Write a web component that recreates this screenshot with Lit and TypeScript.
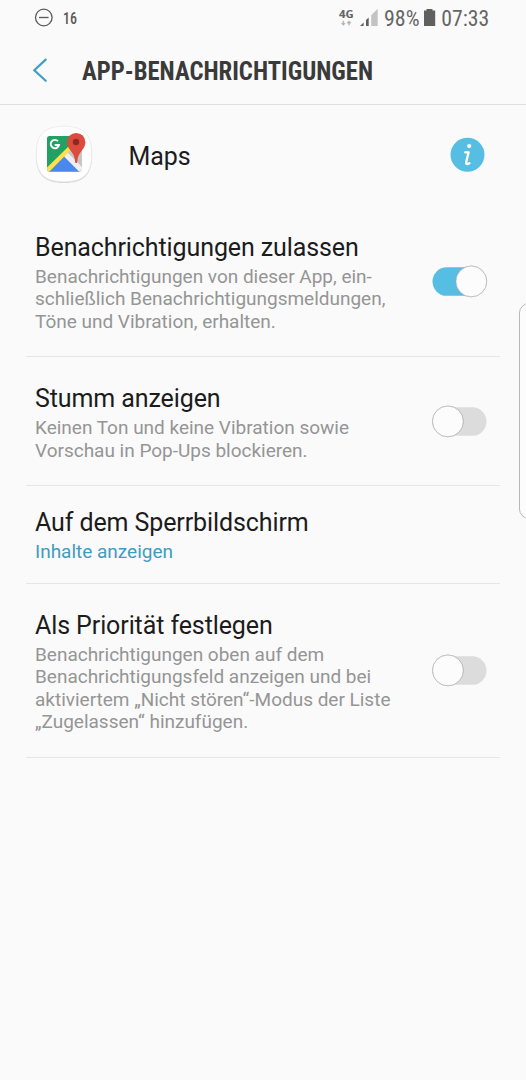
import { LitElement, html, css, nothing } from "lit";
import { customElement, property } from "lit/decorators.js";

@customElement("toggle-switch")
class ToggleSwitch extends LitElement {
  @property({ type: Boolean, reflect: true }) on = false;

  static styles = css`
    :host { display: block; flex: none; width: 55px; height: 34px; }
    svg { display: block; overflow: visible; }
    .thumb { filter: drop-shadow(0 0.8px 0.4px rgba(0, 0, 0, 0.25)); }
  `;

  render() {
    return html`<svg width="55" height="34" viewBox="0 0 55 34">
      <rect x="0.5" y="2.3" width="54" height="28.5" rx="14.25" fill=${this.on ? "#56bee3" : "#dcdcdc"} />
      <circle class="thumb" cx=${this.on ? 39.3 : 15.9} cy="16.4" r="15.4" fill="#fcfcfc" stroke="#b8b8b8" stroke-width="0.8" />
    </svg>`;
  }
}

@customElement("setting-row")
class SettingRow extends LitElement {
  @property() heading = "";
  @property({ attribute: false }) lines: string[] = [];
  @property() value = "";
  @property() toggle = "";

  static styles = css`
    :host { display: flex; align-items: center; justify-content: space-between; box-sizing: border-box; margin: 0 26px; padding: 0 13px 0 9px; border-bottom: 1px solid #e6e6e6; }
    .copy { padding-top: 3px; }
    .heading { margin-bottom: 3px; font-size: 25px; line-height: 30px; color: #1c1c1c; white-space: nowrap; letter-spacing: -0.1px; }
    .line { font-size: 19px; line-height: 22.5px; color: #959595; white-space: nowrap; letter-spacing: -0.01px; }
    .value { color: #3f9cbf; }
  `;

  render() {
    return html`
      <div class="copy">
        <div class="heading">${this.heading}</div>
        ${this.lines.map((l) => html`<div class="line">${l}</div>`)}
        ${this.value ? html`<div class="line value">${this.value}</div>` : nothing}
      </div>
      ${this.toggle ? html`<toggle-switch ?on=${this.toggle === "on"}></toggle-switch>` : nothing}
    `;
  }
}

@customElement("app-root")
class AppRoot extends LitElement {
  static styles = css`
    :host { display: block; position: relative; width: 526px; height: 1080px; overflow: hidden; background: #fafafa; font-family: Roboto, "Liberation Sans", sans-serif; }
    svg { display: block; }
    .condensed { font-family: "Roboto Condensed", Roboto, sans-serif; font-stretch: 75%; }
    .status { height: 36px; }
    .title { height: 68px; border-bottom: 1px solid #e0e0e0; }
    .app { display: flex; align-items: center; height: 100px; padding: 0 40px 0 34px; }
    .name { flex: 1; padding: 2px 0 0 34.5px; font-size: 25px; color: #1c1c1c; letter-spacing: -0.05px; }
    .r1 { height: 152px; padding-top: 2px; }
    .r2 { height: 129px; padding-top: 1px; }
    .r3 { height: 98px; }
    .r4 { height: 174px; }
    .edge { position: absolute; left: 519px; top: 303px; width: 20px; height: 214px; border: 1px solid #b8b8b8; border-radius: 10px; background: #fcfcfc; }
  `;

  render() {
    return html`
      <div class="status">
        <svg width="526" height="36" viewBox="0 0 526 36" class="condensed">
          <g fill="none" stroke="#5a5a5a" stroke-width="1.3">
            <circle cx="43.8" cy="17.5" r="8.3" />
            <path d="M39 17.5h9.6" />
          </g>
          <text x="63" y="23.8" font-size="16.5" font-weight="500" textLength="14" lengthAdjust="spacingAndGlyphs" fill="#5a5a5a">16</text>
          <text x="339" y="17.6" font-family="Open Sans" font-size="10.5" font-weight="700" textLength="14.6" lengthAdjust="spacingAndGlyphs" fill="#666">4G</text>
          <path d="M343.300 20.800v4M341.600 23.100l1.700 1.800 1.700-1.800M349 25.500v-4M347.300 23.200l1.700-1.800 1.700 1.800" fill="none" stroke="#b4b4b4" stroke-width="1.300" />
          <path d="M360 26l3.600-3.600V26z M366 20l2.700-2.400V26H366z" fill="#606060" />
          <path d="M371.200 15.200l6.500-6.400V26h-6.500z" fill="#c3c3c3" />
          <text x="384" y="25.8" font-size="22" textLength="35.6" lengthAdjust="spacingAndGlyphs" fill="#666">98%</text>
          <path d="M424 10.5h2.500V9h6v1.500h2.700V26H424z" fill="#606060" />
          <text x="441.300" y="25.800" font-size="22" textLength="48" lengthAdjust="spacingAndGlyphs" fill="#666">07:33</text>
        </svg>
      </div>
      <div class="title">
        <svg width="526" height="68" viewBox="0 0 526 68" class="condensed">
          <path d="M45.700 23.600L34.300 34.200 45.700 44.800" fill="none" stroke="#409fc4" stroke-width="2.200" stroke-linecap="round" />
          <text x="82" y="44" font-size="25" font-weight="700" textLength="291" lengthAdjust="spacingAndGlyphs" fill="#3a3a3a">APP-BENACHRICHTIGUNGEN</text>
        </svg>
      </div>
      <div class="app">
        <svg width="60" height="60" viewBox="34 125 60 60">
          <defs><clipPath id="map"><rect x="47" y="136" width="35" height="35.500" rx="2.500" /></clipPath></defs>
          <path d="M64 127c20 0 28 8 28 28s-8 28-28 28-28-8-28-28 8-28 28-28z" fill="#dadada" />
          <path d="M64 126.300c19.700 0 27.700 8 27.700 27.700s-8 27.700-27.700 27.700-27.700-8-27.700-27.700 8-27.700 27.700-27.700z" fill="#fdfdfd" stroke="#e4e4e4" stroke-width="0.600" />
          <g clip-path="url(#map)">
            <rect x="47" y="136" width="35" height="36" fill="#21a163" />
            <path d="M64.500 154L74 143l8-4v33z" fill="#c6c6c6" />
            <path d="M47 173.500l17.500-17 17 17z" fill="#4a87ee" />
            <path d="M64 156.500l3.500-4 15 15v5h-2.500z" fill="#efefef" />
            <path d="M46 168.500L70 145l3 2.800L49 172h-3z" fill="#ffdf4b" />
          </g>
          <path d="M58 141.200A4.200 4.200 0 1 0 59 145H54.700" fill="none" stroke="#fff" stroke-width="1.900" />
          <path d="M75.200 162.500c-.3-5.500-1.800-8.500-4.500-11.700-2.500-3-3.700-5.300-3.700-8.700a9.200 9.200 0 1 1 18.400 0c0 3.400-1.200 5.700-3.700 8.700-2.700 3.200-4.200 6.200-4.500 11.700q-1 1.200-2 0z" fill="#dd4b3e" />
          <circle cx="76" cy="142" r="3.200" fill="#8a2a22" />
        </svg>
        <div class="name">Maps</div>
        <svg width="36" height="36" viewBox="0 0 36 36">
          <circle cx="17.500" cy="17.800" r="17" fill="#56bee3" />
          <circle cx="19.200" cy="9" r="2.100" fill="#fff" />
          <path d="M15.200 15.300h3.400l-2.300 9.500q-.5 2.500 1.200 2.300l1.900-.8" fill="none" stroke="#fff" stroke-width="2.300" stroke-linejoin="round" stroke-linecap="round" />
        </svg>
      </div>
      <setting-row class="r1" heading="Benachrichtigungen zulassen" toggle="on"
        .lines=${["Benachrichtigungen von dieser App, ein-", "schließlich Benachrichtigungsmeldungen,", "Töne und Vibration, erhalten."]}></setting-row>
      <setting-row class="r2" heading="Stumm anzeigen" toggle="off"
        .lines=${["Keinen Ton und keine Vibration sowie", "Vorschau in Pop-Ups blockieren."]}></setting-row>
      <setting-row class="r3" heading="Auf dem Sperrbildschirm" value="Inhalte anzeigen"></setting-row>
      <setting-row class="r4" heading="Als Priorität festlegen" toggle="off"
        .lines=${["Benachrichtigungen oben auf dem", "Benachrichtigungsfeld anzeigen und bei", "aktiviertem „Nicht stören“-Modus der Liste", "„Zugelassen“ hinzufügen."]}></setting-row>
      <div class="edge"></div>
    `;
  }
}
